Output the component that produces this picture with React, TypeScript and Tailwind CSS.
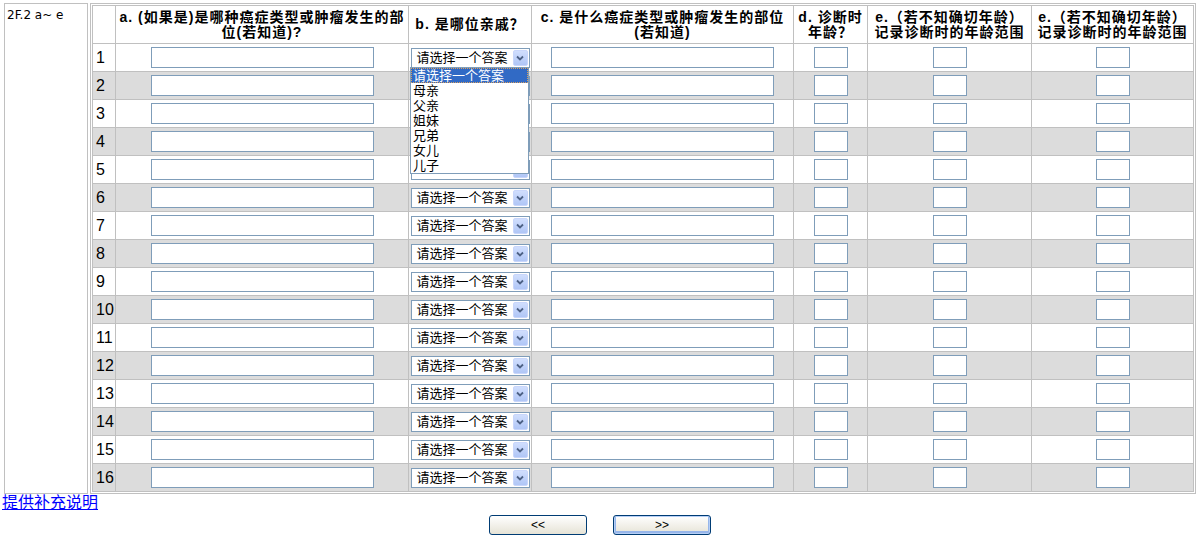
import React from "react";

const cols = "grid grid-cols-[23px_293px_123px_262px_74px_164px_162px]";
const cell = "border-r border-b border-[#c0c0c0] flex items-center justify-center";
const hCell = "border-r border-b border-[#c0c0c0] flex items-center justify-center text-center font-bold text-[14px] leading-[15px] tracking-[1px] whitespace-nowrap";

const options = ["请选择一个答案", "母亲", "父亲", "姐妹", "兄弟", "女儿", "儿子"];

const TextBox = ({ w }: { w: string }) => (
  <div className={`${w} h-[21px] border border-[#7f9db9] bg-white`} />
);

// rows 2-5 sit under the open list, so their label is not drawn
const Select = ({ covered }: { covered?: boolean }) => (
  <div className="w-[119px] h-[20px] border border-[#7f9db9] bg-white flex items-center">
    {!covered && <span className="pl-[5px] text-[13px] leading-none">请选择一个答案</span>}
    <span className="ml-auto mr-[1px] w-[15px] h-[16px] rounded-[2px] border border-[#c8d6fb] bg-gradient-to-b from-[#d0defd] to-[#b0c6f6] flex items-center justify-center">
      <svg width="8" height="6" viewBox="0 0 8 6">
        <path d="M1 1.5 L4 4.5 L7 1.5" fill="none" stroke="#4d6185" strokeWidth="1.8" />
      </svg>
    </span>
  </div>
);

export default function App() {
  const rows = Array.from({ length: 16 }, (_, i) => i + 1);
  return (
    <div className="w-[1200px] h-[540px] bg-white text-black font-['Liberation_Sans','Noto_Sans_CJK_SC',sans-serif]">
      <div className="flex gap-[2px] pl-[4px] pt-[3px]">
        <div className="w-[84px] border border-[#c0c0c0] px-[2px] pt-[4px] text-[12px] leading-[14px] font-['DejaVu_Sans',sans-serif]">
          2F.2 a~ e
        </div>
        <div className="w-[1106px] border border-[#c0c0c0] p-[1px]">
          <div className="relative border-l border-t border-[#c0c0c0]">
            <div className={`${cols} h-[38px]`}>
              <div className={hCell}></div>
              <div className={hCell}>
                a. (如果是)是哪种癌症类型或肿瘤发生的部
                <br />
                位(若知道)?
              </div>
              <div className={hCell}>b. 是哪位亲戚？</div>
              <div className={hCell}>
                c. 是什么癌症类型或肿瘤发生的部位
                <br />
                (若知道)
              </div>
              <div className={hCell}>
                d. 诊断时
                <br />
                年龄？
              </div>
              <div className={hCell}>
                e.（若不知确切年龄）
                <br />
                记录诊断时的年龄范围
              </div>
              <div className={hCell}>
                e.（若不知确切年龄）
                <br />
                记录诊断时的年龄范围
              </div>
            </div>
            {rows.map((n) => (
              <div key={n} className={`${cols} h-[28px] ${n % 2 === 0 ? "bg-[#dcdcdc]" : "bg-white"}`}>
                <div className="border-r border-b border-[#c0c0c0] flex items-center pl-[3px] text-[16px]">
                  {n}
                </div>
                <div className={cell}>
                  <TextBox w="w-[223px]" />
                </div>
                <div className={cell}>
                  <Select covered={n >= 2 && n <= 5} />
                </div>
                <div className={cell}>
                  <TextBox w="w-[223px]" />
                </div>
                <div className={cell}>
                  <TextBox w="w-[34px]" />
                </div>
                <div className={cell}>
                  <TextBox w="w-[34px]" />
                </div>
                <div className={cell}>
                  <TextBox w="w-[34px]" />
                </div>
              </div>
            ))}
            <div className="absolute left-[317px] top-[61px] w-[119px] h-[107px] border border-[#7f9db9] bg-white text-[13px] leading-[15px]">
              {options.map((o, i) => (
                <div
                  key={o}
                  className={
                    i === 0
                      ? "h-[15px] px-[1px] bg-[#316ac5] text-white border border-dotted border-[#d8a060] leading-[13px]"
                      : "h-[15px] px-[2px]"
                  }
                >
                  {o}
                </div>
              ))}
            </div>
          </div>
        </div>
      </div>
      <div className="pl-[2px] h-[18px] text-[16px] leading-[18px]">
        <a href="#" className="text-[#0000ff] underline">
          提供补充说明
        </a>
      </div>
      <div className="flex justify-center gap-[26px] mt-[3px]">
        <button className="w-[98px] h-[20px] rounded-[3px] border border-[#003c74] bg-gradient-to-b from-white to-[#e6e3d6] text-[12px] leading-none">
          &lt;&lt;
        </button>
        <button className="w-[98px] h-[20px] rounded-[3px] border border-[#003c74] bg-gradient-to-b from-white to-[#e6e3d6] shadow-[inset_0_0_0_1px_#b6cff6,inset_0_-1px_0_2px_#97b6ea] text-[12px] leading-none">
          &gt;&gt;
        </button>
      </div>
    </div>
  );
}
